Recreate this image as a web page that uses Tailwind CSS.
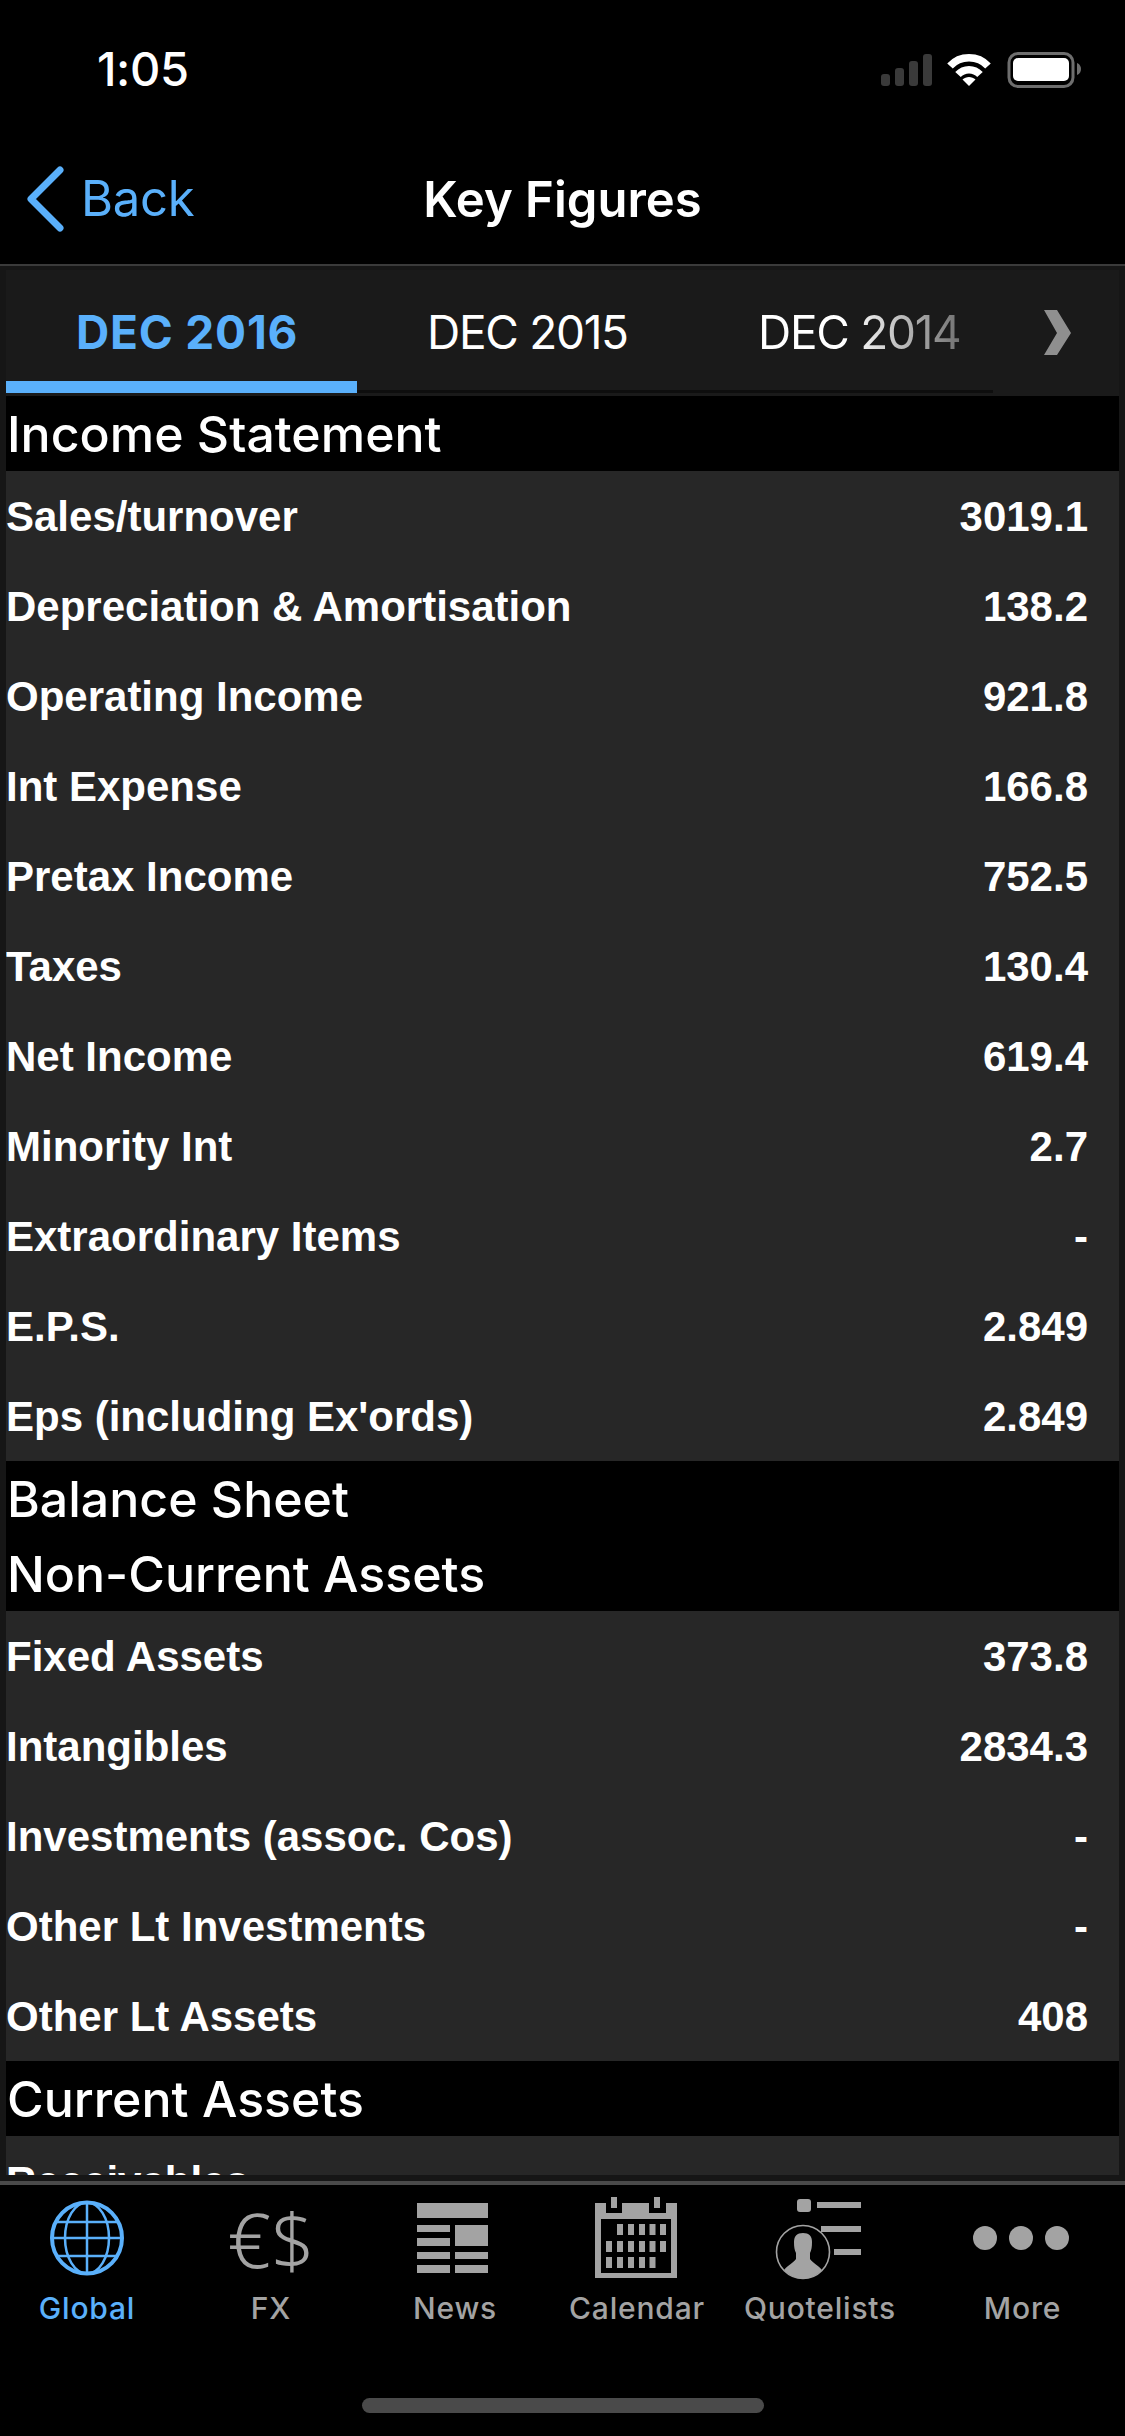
<!DOCTYPE html>
<html lang="en">
<head>
    <meta charset="UTF-8">
    <title>Key Figures</title>
    <script src="https://cdn.jsdelivr.net/npm/@tailwindcss/browser@4"></script>
</head>
<body class="bg-black">
    <div class="w-[1125px] h-[2436px] bg-black flex flex-col overflow-hidden font-['Liberation_Sans',sans-serif] text-white">

        <!-- status bar -->
        <div class="h-[135px] shrink-0 flex items-start justify-between">
            <div class="ml-[97px] mt-[42px] text-[47px] leading-[54px] font-medium font-['Inter',sans-serif] tracking-[-0.4px]">1:05</div>
            <div class="mr-[44px] mt-[52px] flex items-center">
                <svg width="56" height="34" viewBox="0 0 56 34" class="mr-[12px]" fill="#3a3a3a">
                    <rect x="4" y="21" width="9" height="12" rx="3"/>
                    <rect x="18" y="15" width="9" height="18" rx="3"/>
                    <rect x="32" y="8" width="9" height="25" rx="3"/>
                    <rect x="46" y="1" width="9" height="32" rx="3"/>
                </svg>
                <svg width="48" height="34" viewBox="0 0 48 34" class="mr-[14px]" fill="none" stroke="#fff" stroke-width="7.5">
                    <path d="M5 13 C15 2 33 2 43 13"/>
                    <path d="M13 21.500 C19 15 29 15 35 21.500"/>
                    <path d="M24 33 L17.500 26.500 C21 23 27 23 30.500 26.500 Z" fill="#fff" stroke="none"/>
                </svg>
                <svg width="74" height="36" viewBox="0 0 74 36">
                    <rect x="2" y="1.500" width="64" height="33" rx="9" fill="none" stroke="#6e6e6e" stroke-width="3"/>
                    <rect x="6" y="6" width="56" height="23" rx="5" fill="#fff"/>
                    <path d="M70 11 C73 12 74 15 74 17 C74 19 73 22 70 23 Z" fill="#6e6e6e"/>
                </svg>
            </div>
        </div>

        <!-- nav bar -->
        <div class="h-[129px] shrink-0 relative flex items-center justify-center">
            <div class="absolute left-[26px] top-[31px] flex items-center">
                <svg width="38" height="66" viewBox="0 0 38 66" fill="none" stroke="#5ab0fb" stroke-width="7" stroke-linecap="round" stroke-linejoin="round">
                    <path d="M34 4 L5 33 L34 62"/>
                </svg>
                <span class="ml-[17px] text-[49px] leading-[60px] text-[#5ab0fb] font-['Inter',sans-serif] tracking-[-0.3px]">Back</span>
            </div>
            <span class="text-[49px] leading-[60px] font-semibold font-['Inter',sans-serif]">Key Figures</span>
        </div>

        <div class="h-[2px] shrink-0 bg-[#3a3a3a]"></div>

        <!-- content -->
        <div class="h-[1915px] shrink-0 bg-[#161616] pt-[4px] pb-[6px] px-[6px] flex flex-col">
            <!-- period tabs -->
            <div class="h-[126px] shrink-0 bg-[#1a1a1a] relative">
                <div class="h-[111px] pt-[14px] flex items-center text-[46px] tracking-[-1.3px] font-['Inter',sans-serif]">
                    <span class="w-[351px] pl-[70px] font-bold tracking-[0.8px] text-[#5ab0fb]">DEC 2016</span>
                    <span class="w-[330px] pl-[70px]">DEC 2015</span>
                    <span class="ml-[71px] bg-[linear-gradient(90deg,#fff_45%,#707070_100%)] bg-clip-text text-transparent">DEC 2014</span>
                </div>
                <svg width="30" height="48" viewBox="0 0 30 48" class="absolute left-[1037px] top-[39px]">
                    <path d="M1 1 L14 1 L28 24 L14 46 L1 46 L14 24 Z" fill="#8f8f8f"/>
                </svg>
                <div class="w-[987px] h-[12px] flex items-end">
                    <div class="w-[351px] h-[12px] bg-[#5ab0fb]"></div>
                    <div class="flex-1 h-[3px] bg-[#0e0e0e]"></div>
                </div>
            </div>

            <div class="flex-1 min-h-0 overflow-hidden">
                <div class="h-[75px] pt-[2px] bg-black flex items-center pl-[1px] text-[50px] font-medium font-['Inter',sans-serif]">Income Statement</div>
                <div class="bg-[#272727] text-[42px] font-bold">
                    <div class="h-[90px] flex items-center justify-between pr-[31px]"><span>Sales/turnover</span><span>3019.1</span></div>
                    <div class="h-[90px] flex items-center justify-between pr-[31px]"><span>Depreciation &amp; Amortisation</span><span>138.2</span></div>
                    <div class="h-[90px] flex items-center justify-between pr-[31px]"><span>Operating Income</span><span>921.8</span></div>
                    <div class="h-[90px] flex items-center justify-between pr-[31px]"><span>Int Expense</span><span>166.8</span></div>
                    <div class="h-[90px] flex items-center justify-between pr-[31px]"><span>Pretax Income</span><span>752.5</span></div>
                    <div class="h-[90px] flex items-center justify-between pr-[31px]"><span>Taxes</span><span>130.4</span></div>
                    <div class="h-[90px] flex items-center justify-between pr-[31px]"><span>Net Income</span><span>619.4</span></div>
                    <div class="h-[90px] flex items-center justify-between pr-[31px]"><span>Minority Int</span><span>2.7</span></div>
                    <div class="h-[90px] flex items-center justify-between pr-[31px]"><span>Extraordinary Items</span><span>-</span></div>
                    <div class="h-[90px] flex items-center justify-between pr-[31px]"><span>E.P.S.</span><span>2.849</span></div>
                    <div class="h-[90px] flex items-center justify-between pr-[31px]"><span>Eps (including Ex'ords)</span><span>2.849</span></div>
                </div>
                <div class="h-[75px] pt-[2px] bg-black flex items-center pl-[1px] text-[50px] font-medium font-['Inter',sans-serif]">Balance Sheet</div>
                <div class="h-[75px] pt-[2px] bg-black flex items-center pl-[1px] text-[50px] font-medium font-['Inter',sans-serif]">Non-Current Assets</div>
                <div class="bg-[#272727] text-[42px] font-bold">
                    <div class="h-[90px] flex items-center justify-between pr-[31px]"><span>Fixed Assets</span><span>373.8</span></div>
                    <div class="h-[90px] flex items-center justify-between pr-[31px]"><span>Intangibles</span><span>2834.3</span></div>
                    <div class="h-[90px] flex items-center justify-between pr-[31px]"><span>Investments (assoc. Cos)</span><span>-</span></div>
                    <div class="h-[90px] flex items-center justify-between pr-[31px]"><span>Other Lt Investments</span><span>-</span></div>
                    <div class="h-[90px] flex items-center justify-between pr-[31px]"><span>Other Lt Assets</span><span>408</span></div>
                </div>
                <div class="h-[75px] pt-[2px] bg-black flex items-center pl-[1px] text-[50px] font-medium font-['Inter',sans-serif]">Current Assets</div>
                <div class="bg-[#272727] text-[42px] font-bold">
                    <div class="h-[90px] flex items-center justify-between pr-[31px]"><span>Receivables</span></div>
                </div>
            </div>
        </div>

        <div class="h-[4px] shrink-0 bg-[#4a4a4a]"></div>

        <!-- tab bar -->
        <div class="flex-1 relative text-[#a3a3a3] font-['Inter',sans-serif] text-[30px] font-medium tracking-[0.8px]">
            <div class="flex pt-[12px]">
                <div class="w-[174px] flex flex-col items-center text-[#5ab0fb]">
                    <svg width="100" height="84" viewBox="0 0 100 84" fill="none" stroke="#5ab0fb" stroke-width="2.5">
                        <ellipse cx="50" cy="41" rx="35" ry="35.5" stroke-width="4"/>
                        <ellipse cx="50" cy="41" rx="22" ry="35.5"/>
                        <path d="M50 5 V77 M15 41 H85 M18 25 H82 M19 59 H81"/>
                    </svg>
                    <span class="mt-[5px]">Global</span>
                </div>
                <div class="w-[194px] flex flex-col items-center">
                    <div class="h-[84px] w-[100px] flex justify-center text-[76px] leading-[84px] tracking-[0px] font-['Noto_Sans',sans-serif] font-light whitespace-nowrap">€$</div>
                    <span class="mt-[5px]">FX</span>
                </div>
                <div class="w-[174px] flex flex-col items-center">
                    <svg width="100" height="84" viewBox="0 0 100 84" fill="#a3a3a3">
                        <rect x="12" y="6" width="71" height="15"/>
                        <rect x="12" y="28" width="33" height="7"/>
                        <rect x="12" y="41" width="33" height="8"/>
                        <rect x="12" y="55" width="33" height="7"/>
                        <rect x="12" y="68" width="33" height="8"/>
                        <rect x="50" y="28" width="33" height="21"/>
                        <rect x="50" y="55" width="33" height="7"/>
                        <rect x="50" y="68" width="33" height="8"/>
                    </svg>
                    <span class="mt-[5px]">News</span>
                </div>
                <div class="w-[190px] flex flex-col items-center">
                    <svg width="100" height="84" viewBox="0 0 100 84" fill="#a3a3a3">
                        <rect x="8" y="6" width="82" height="75"/>
                        <rect x="14" y="22" width="70" height="54" fill="#000"/>
                        <rect x="19" y="0" width="16" height="16" fill="#000"/>
                        <rect x="62" y="0" width="17" height="16" fill="#000"/>
                        <rect x="24" y="0" width="6" height="11"/>
                        <rect x="67" y="0" width="6" height="11"/>
                        <rect x="30" y="27" width="6" height="11"/><rect x="41" y="27" width="6" height="11"/><rect x="52" y="27" width="6" height="11"/><rect x="62.5" y="27" width="6" height="11"/><rect x="73" y="27" width="6" height="11"/>
                        <rect x="19" y="44" width="6" height="11"/><rect x="30" y="44" width="6" height="11"/><rect x="41" y="44" width="6" height="11"/><rect x="52" y="44" width="6" height="11"/><rect x="62.5" y="44" width="6" height="11"/><rect x="73" y="44" width="6" height="11"/>
                        <rect x="19" y="60" width="6" height="11"/><rect x="30" y="60" width="6" height="11"/><rect x="41" y="60" width="6" height="11"/><rect x="52" y="60" width="6" height="11"/><rect x="62.5" y="60" width="6" height="11"/>
                    </svg>
                    <span class="mt-[5px]">Calendar</span>
                </div>
                <div class="w-[176px] flex flex-col items-center">
                    <svg width="100" height="84" viewBox="0 0 100 84" fill="#a3a3a3">
                        <rect x="27" y="2" width="14" height="13" rx="3"/>
                        <rect x="47" y="5" width="44" height="6"/>
                        <rect x="51" y="29" width="40" height="6"/>
                        <rect x="64" y="52" width="27" height="6"/>
                        <circle cx="33" cy="55" r="26.5" fill="#000" stroke="#a3a3a3" stroke-width="1.6"/>
                        <path d="M33 36 C39 36 42 39 42 45 C42 50 41.500 53 40 56 L40 62 C43 66 48 68 52 73 C47 78 41 81.500 33 81.500 C25 81.500 19 78 14 73 C18 68 23 66 26 62 L26 56 C24.500 53 24 50 24 45 C24 39 27 36 33 36 Z"/>
                    </svg>
                    <span class="mt-[5px]">Quotelists</span>
                </div>
                <div class="w-[217px] pl-[12px] flex flex-col items-center">
                    <svg width="100" height="84" viewBox="0 0 100 84" fill="#a3a3a3">
                        <circle cx="12" cy="41" r="12"/>
                        <circle cx="48" cy="41" r="12"/>
                        <circle cx="84" cy="41" r="12"/>
                    </svg>
                    <span class="mt-[5px]">More</span>
                </div>
            </div>
            <div class="absolute left-[362px] top-[213px] w-[402px] h-[15px] rounded-full bg-[#4a4a4a]"></div>
        </div>
    </div>
</body>
</html>
